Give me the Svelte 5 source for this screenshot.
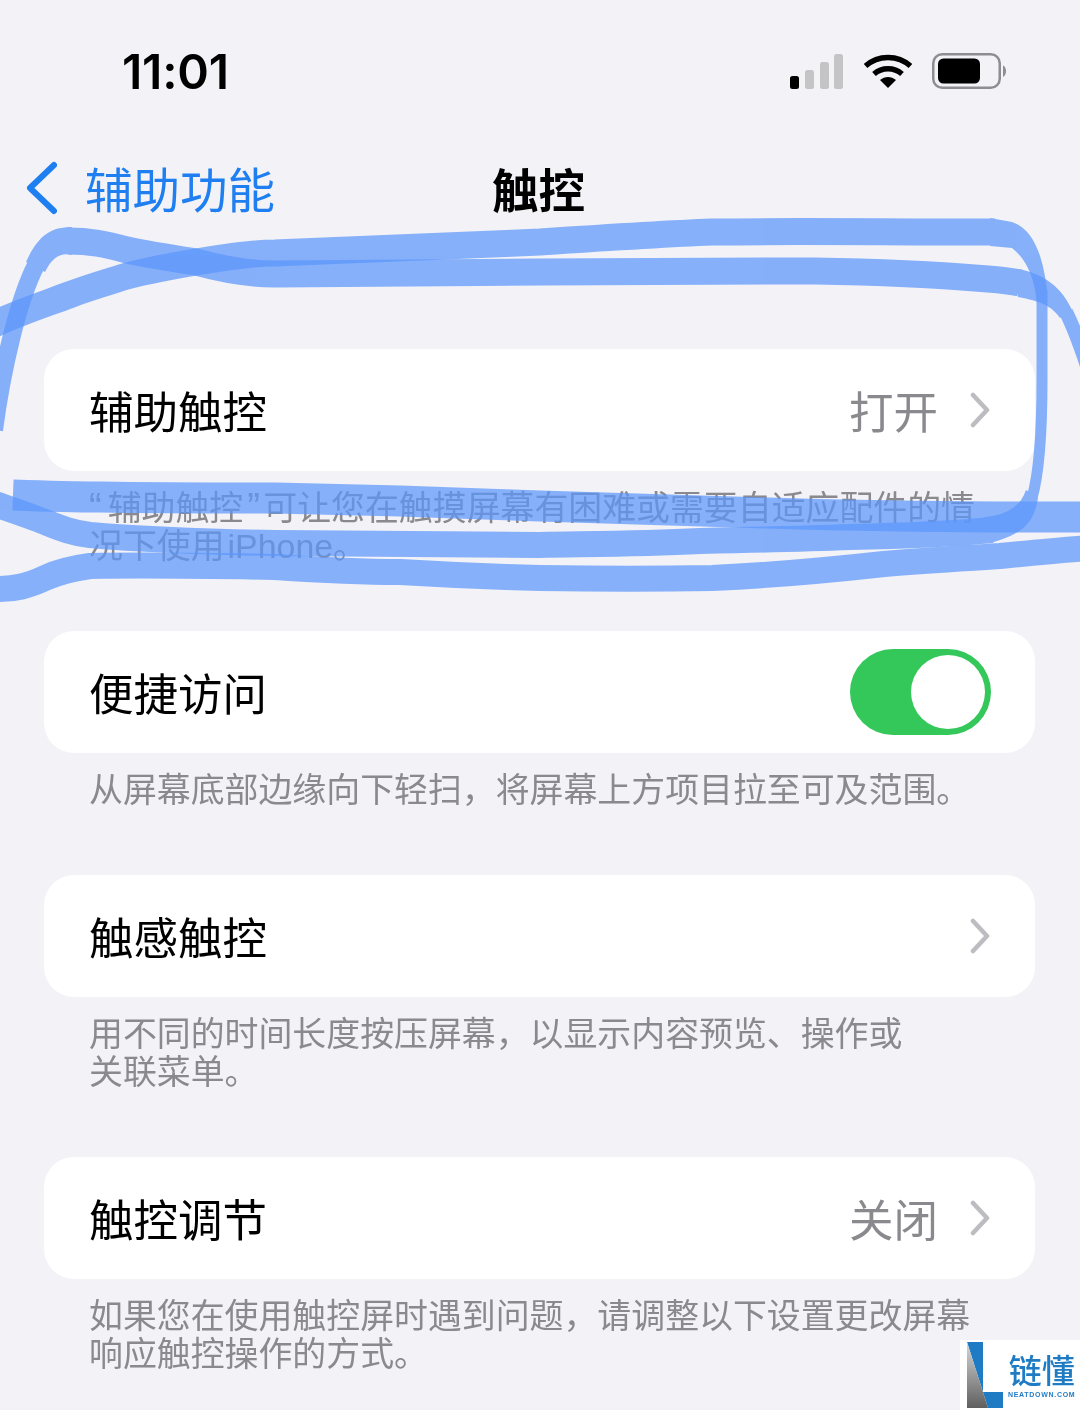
<script>
  const sections = [
    { title: '辅助触控', value: '打开', chevron: true, lines: ['“辅助触控”可让您在触摸屏幕有困难或需要自适应配件的情', '况下使用 iPhone。'] },
    { title: '便捷访问', toggle: true, lines: ['从屏幕底部边缘向下轻扫，将屏幕上方项目拉至可及范围。'] },
    { title: '触感触控', chevron: true, lines: ['用不同的时间长度按压屏幕，以显示内容预览、操作或', '关联菜单。'] },
    { title: '触控调节', value: '关闭', chevron: true, lines: ['如果您在使用触控屏时遇到问题，请调整以下设置更改屏幕', '响应触控操作的方式。'] }
  ];
  const strokes = [
    [
      { w: 18, d: 'M-6 430 C2 370 18 300 36 265' },
      { fill: 'M26 262 C38 236 50 227 72 227 L72 255 C60 252 52 258 45 272 Z' },
      { w: 27, d: 'M68 241 C90 241 105 244 127 250 C150 255 170 258 196 262 C225 270 250 274 275 274 C360 274 450 272 540 272 C650 271 730 271 815 271 C880 272 940 275 988 279 C1000 280 1010 281 1020 283' },
      { fill: 'M1018 269 C1045 274 1062 288 1072 310 L1060 318 C1052 306 1040 301 1018 297 Z' },
      { w: 14, d: 'M1066 312 C1074 328 1082 350 1090 375' }
    ],
    [
      { w: 27, d: 'M-8 325 C20 312 45 304 69 295 C90 287 108 282 127 276 C150 270 172 266 196 262 C225 257 250 253 275 253 C360 249 450 246 540 242 C600 238 660 234 712 232 C800 231 880 232 953 232 C970 232 985 232 995 232' },
      { fill: 'M990 218 L1012 222 C1030 228 1042 248 1047 290 L1037 303 C1035 285 1030 262 1012 248 L990 246 Z' },
      { w: 11, d: 'M1042 290 C1042 320 1042 350 1042 380 C1042 420 1040 470 1032 498' },
      { fill: 'M1026 490 L1038 498 C1034 522 1024 534 990 543 L985 517 C1005 515 1020 508 1026 490 Z' },
      { w: 26, d: 'M992 530 C950 534 900 536 850 537 C800 539 750 540 700 541 C640 544 590 544 540 545 C450 545 360 544 275 543 C210 542 150 540 90 535 C72 533 60 528 45 522 C30 516 15 511 -8 503' }
    ],
    [{ w: 31, d: 'M13 495 C40 496 70 497 100 497 C160 498 220 498 275 498 C320 499 360 500 400 501 C450 503 500 505 540 506 C630 509 720 512 800 514 C880 516 950 517 1020 517 C1050 517 1070 517 1090 517' }],
    [{ w: 26, d: 'M-8 589 C15 590 30 585 45 578 C60 571 75 568 90 566 C150 565 220 566 275 567 C320 570 370 572 400 572 C450 575 500 577 540 578 C600 579 660 579 712 578 C780 575 830 570 884 564 C930 560 970 558 1000 556 C1040 552 1060 550 1090 548' }]
  ];
  const split = (line) => line.split(/([“”])/).filter(Boolean);
</script>

<main class="screen">
  <header class="status">
    <span class="time">11:01</span>
    <div class="status-icons">
      <svg class="signal" viewBox="0 0 56 36" width="56" height="36" aria-hidden="true">
        <rect x="0" y="22" width="9" height="13" rx="2.5" fill="#000" />
        <rect x="15" y="16" width="9" height="19" rx="2.5" fill="#c4c4c7" />
        <rect x="30" y="8" width="9" height="27" rx="2.5" fill="#c4c4c7" />
        <rect x="44" y="0" width="9" height="35" rx="2.5" fill="#c4c4c7" />
      </svg>
      <svg class="wifi" viewBox="0 0 48 36" width="48" height="36" aria-hidden="true">
        <path d="M1.5 13 C14 1.5 34 1.5 46.5 13" fill="none" stroke="#000" stroke-width="5.5" />
        <path d="M10 21 C18 14 30 14 38 21" fill="none" stroke="#000" stroke-width="5.5" />
        <path d="M16 27 C21 23 27 23 32 27 L24 35 Z" fill="#000" />
      </svg>
      <svg class="battery" viewBox="0 0 78 38" width="78" height="38" aria-hidden="true">
        <rect x="3.25" y="1.25" width="66.5" height="33.5" rx="9" fill="none" stroke="#8e8e92" stroke-width="2.5" />
        <rect x="8" y="5.5" width="42" height="25" rx="5.5" fill="#000" />
        <path d="M73 12.5 C77 14 77 22 73 24 Z" fill="#8e8e92" />
      </svg>
    </div>
  </header>

  <nav class="nav">
    <div class="back">
      <svg viewBox="0 0 32 54" width="32" height="54" aria-hidden="true">
        <path d="M29 4 L5 27 L29 50" fill="none" stroke="#1f7ff0" stroke-width="6" stroke-linecap="round" stroke-linejoin="round" />
      </svg>
      <span>辅助功能</span>
    </div>
    <h1>触控</h1>
  </nav>

  <div class="groups">
    {#each sections as s}
      <section>
        <div class="card">
          <span class="label">{s.title}</span>
          <div class="right">
            {#if s.value}<span class="value">{s.value}</span>{/if}
            {#if s.chevron}
              <svg class="chevron" viewBox="0 0 20 36" width="20" height="36" aria-hidden="true">
                <path d="M3 3 L17 18 L3 33" fill="none" stroke="#bdbdc1" stroke-width="4.5" stroke-linecap="round" stroke-linejoin="round" />
              </svg>
            {/if}
            {#if s.toggle}
              <div class="toggle"><div class="knob"></div></div>
            {/if}
          </div>
        </div>
        <p class="note">
          {#each s.lines as line}
            <span class="line">{#each split(line) as part}{#if part === '“'}<span class="q open">{part}</span>{:else if part === '”'}<span class="q close">{part}</span>{:else}{part}{/if}{/each}</span>
          {/each}
        </p>
      </section>
    {/each}
  </div>

  <svg class="scribble" viewBox="0 0 1080 1410" width="1080" height="1410" aria-hidden="true">
    {#each strokes as parts}
      <g class="stroke">
        {#each parts as p}
          {#if p.fill}
            <path d={p.fill} fill="#5c96fb" />
          {:else}
            <path d={p.d} fill="none" stroke="#5c96fb" stroke-width={p.w} stroke-linecap="butt" stroke-linejoin="round" />
          {/if}
        {/each}
      </g>
    {/each}
  </svg>

  <div class="logo">
    <svg viewBox="0 0 44 70" width="44" height="70" aria-hidden="true">
      <defs>
        <linearGradient id="lg" x1="0" y1="0" x2="0" y2="1">
          <stop offset="0" stop-color="#d8d8d8" />
          <stop offset="1" stop-color="#5f5f5f" />
        </linearGradient>
      </defs>
      <path d="M7 2 H23 V52 H43 V68 H28 Z" fill="#1f7cc4" />
      <path d="M7 2 L28 68 H7 Z" fill="url(#lg)" />
    </svg>
    <div class="logo-text">
      <span class="logo-cn">链懂</span>
      <span class="logo-en">NEATDOWN.COM</span>
    </div>
  </div>
</main>

<style>
  :global(body) {
    margin: 0;
    background: #f2f2f7;
  }
  .screen {
    position: relative;
    width: 1080px;
    height: 1410px;
    overflow: hidden;
    background: #f2f2f7;
    font-family: "Noto Sans CJK SC", "Noto Sans", sans-serif;
    color: #000;
    filter: blur(0.5px);
  }
  .status {
    display: flex;
    align-items: center;
    justify-content: space-between;
    height: 60px;
    padding: 42px 72px 0 122px;
  }
  .time {
    font-family: Inter, "Noto Sans", sans-serif;
    font-size: 48px;
    font-weight: 600;
    letter-spacing: -0.2px;
    line-height: 60px;
  }
  .status-icons {
    display: flex;
    align-items: center;
    gap: 18px;
  }
  .wifi { margin-top: -2px; }
  .nav {
    position: relative;
    display: flex;
    align-items: center;
    justify-content: center;
    height: 64px;
    margin-top: 54px;
    padding-right: 3px;
  }
  .back {
    position: absolute;
    left: 25px;
    top: 0;
    display: flex;
    align-items: center;
    gap: 28px;
    height: 64px;
    color: #1f7ff0;
    font-size: 47.5px;
  }
  .back span { line-height: 64px; }
  h1 {
    margin: 0;
    font-size: 46.5px;
    font-weight: 700;
    line-height: 64px;
  }
  .groups {
    margin: 129px 45px 0 44px;
    display: flex;
    flex-direction: column;
    gap: 66px;
  }
  .card {
    display: flex;
    align-items: center;
    justify-content: space-between;
    height: 122px;
    padding: 0 45px;
    background: #fff;
    border-radius: 30px;
  }
  .label {
    font-size: 44.5px;
    line-height: 60px;
  }
  .right {
    display: flex;
    align-items: center;
    gap: 32px;
  }
  .value {
    color: #8a8a8e;
    font-size: 44.5px;
    line-height: 60px;
  }
  .toggle {
    display: flex;
    justify-content: flex-end;
    align-items: center;
    width: 141px;
    height: 86px;
    margin-right: -1px;
    padding: 0 6px;
    box-sizing: border-box;
    border-radius: 43px;
    background: #34c759;
  }
  .knob {
    width: 74px;
    height: 74px;
    border-radius: 50%;
    background: #fff;
  }
  .note {
    margin: 18px 0 0;
    padding-left: 45px;
    color: #8a8a8e;
    font-family: "Liberation Sans", "Noto Sans CJK SC", sans-serif;
    font-size: 33.9px;
    line-height: 38px;
    word-spacing: -6.4px;
  }
  .line {
    display: block;
    white-space: nowrap;
  }
  .q {
    font-size: 38px;
    line-height: 0;
  }
  .open { padding-right: 6px; }
  .close { padding: 0 3.4px 0 4px; }
  .scribble {
    position: absolute;
    left: 0;
    top: 0;
    pointer-events: none;
  }
  .stroke { opacity: 0.72; }
  .logo {
    position: absolute;
    right: 0;
    bottom: 0;
    display: flex;
    gap: 4px;
    width: 120px;
    height: 70px;
    background: #fff;
    box-sizing: border-box;
  }
  .logo-text {
    display: flex;
    flex-direction: column;
    align-items: center;
  }
  .logo-cn {
    color: #1f7cc4;
    font-size: 33px;
    font-weight: 500;
    line-height: 36px;
    margin-top: 11px;
  }
  .logo-en {
    color: #1f7cc4;
    font-family: "Liberation Sans", sans-serif;
    font-size: 7px;
    font-weight: 700;
    letter-spacing: 0.7px;
    line-height: 10px;
    margin-top: 3px;
    white-space: nowrap;
  }
</style>
